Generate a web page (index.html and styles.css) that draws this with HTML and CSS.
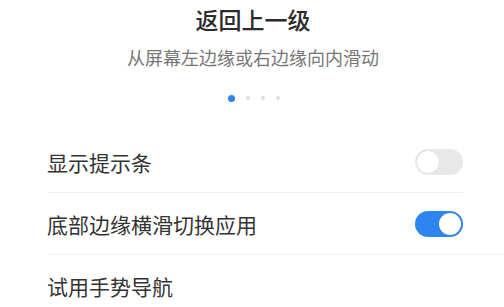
FILE: index.html
```html
<!DOCTYPE html>
<html lang="zh-CN">
<head>
<meta charset="utf-8">
<link rel="stylesheet" href="styles.css">
</head>
<body>
<div class="page">
  <header class="intro">
    <h1 class="title">返回上一级</h1>
    <p class="subtitle">从屏幕左边缘或右边缘向内滑动</p>
    <div class="dots">
      <span class="dot dot-active"></span>
      <span class="dot"></span>
      <span class="dot"></span>
      <span class="dot"></span>
    </div>
  </header>
  <div class="list">
    <div class="row">
      <span class="label">显示提示条</span>
      <span class="switch"><span class="knob"></span></span>
    </div>
    <div class="divider divider-inset"></div>
    <div class="row">
      <span class="label">底部边缘横滑切换应用</span>
      <span class="switch switch-on"><span class="knob"></span></span>
    </div>
    <div class="divider"></div>
    <div class="row">
      <span class="label">试用手势导航</span>
    </div>
  </div>
</div>
</body>
</html>
```

FILE: styles.css
```css
* { box-sizing: border-box; }
html, body {
  margin: 0;
  padding: 0;
  background: #ffffff;
}
body {
  width: 504px;
  height: 307px;
  overflow: hidden;
  font-family: "Noto Sans CJK SC", "Noto Sans", sans-serif;
  color: #333333;
}
.intro {
  display: flex;
  flex-direction: column;
  align-items: center;
  padding-top: 4px;
}
.title {
  margin: 0;
  font-size: 23px;
  line-height: 30px;
  font-weight: 500;
  color: #2b2b2b;
  padding-left: 2px;
}
.subtitle {
  margin: 11px 0 0;
  font-size: 18px;
  line-height: 24px;
  color: #777777;
  padding-left: 2px;
}
.dots {
  margin-top: 25px;
  height: 8px;
  display: flex;
  align-items: center;
  gap: 11px;
  padding-left: 3px;
}
.dot {
  width: 4px;
  height: 4px;
  border-radius: 50%;
  background: #dcdcdc;
}
.dot-active {
  width: 7px;
  height: 7px;
  background: #2c86ee;
}
.list {
  margin-top: 29px;
  padding-left: 47px;
}
.row {
  height: 61px;
  display: flex;
  align-items: center;
  justify-content: space-between;
  padding-right: 41px;
}
.label {
  font-size: 21px;
  line-height: 28px;
  color: #333333;
}
.divider {
  height: 1px;
  background: #efefef;
}
.divider-inset {
  margin-right: 41px;
}
.switch {
  width: 48px;
  height: 26px;
  border-radius: 13px;
  background: #e8e8e8;
  display: flex;
  align-items: center;
  padding: 2px;
}
.knob {
  width: 22px;
  height: 22px;
  border-radius: 50%;
  background: #ffffff;
  box-shadow: 0 0 1px rgba(0,0,0,0.15);
}
.switch-on {
  background: #2c86ee;
  justify-content: flex-end;
}
.switch-on .knob {
  box-shadow: none;
}
```
